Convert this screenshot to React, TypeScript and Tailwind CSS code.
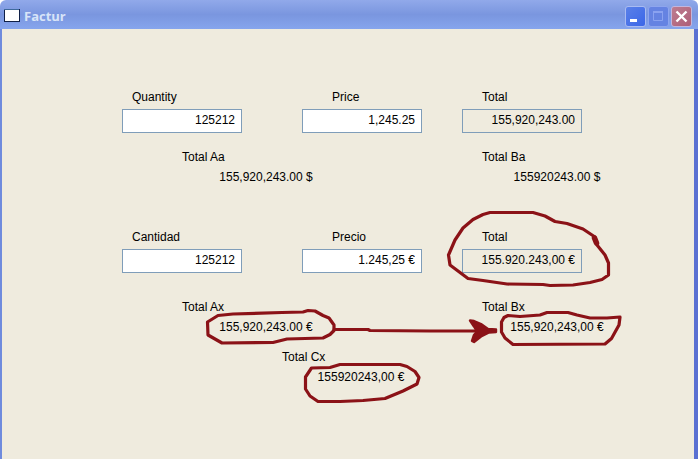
import { ReactNode } from "react";
import { clsx } from "clsx";

interface FieldProps {
    id: string;
    label: string;
    value: string;
    indent: string;
    readOnly?: boolean;
}

function Field({ id, label, value, indent, readOnly }: FieldProps) {
    return (
        <div className="flex w-[120px] flex-col gap-0.5">
            <label htmlFor={id} className={indent}>
                {label}
            </label>
            <input
                id={id}
                defaultValue={value}
                readOnly={readOnly}
                className={clsx(
                    "h-6 w-full border border-[#7f9db9] px-1.5 pb-0.5 text-right outline-none",
                    readOnly ? "bg-transparent" : "bg-white"
                )}
            />
        </div>
    );
}

interface TotalProps {
    label: string;
    value: string;
    width: string;
}

function Total({ label, value, width }: TotalProps) {
    return (
        <dl className={width}>
            <dt>{label}</dt>
            <dd className="text-center">{value}</dd>
        </dl>
    );
}

function CaptionButton({ label, className, children }: { label: string; className: string; children: ReactNode }) {
    return (
        <button
            type="button"
            aria-label={label}
            className={clsx("size-[21px] rounded-[3px] border", className)}
        >
            <svg viewBox="0 0 19 19" className="size-full" fill="none">
                {children}
            </svg>
        </button>
    );
}

function TitleBar() {
    return (
        <header className="flex h-[29px] items-center rounded-t-md bg-linear-to-b from-[#91a9ea] via-[#7a96df] to-[#86a5ed] pt-[3px] pr-1.5 pl-1">
            <svg viewBox="0 0 16 14" className="h-3.5 w-4">
                <path d="M0 0h16v13H0z" fill="#102048" />
                <path d="M0 0h15v1H0z" fill="#3f6a9c" />
                <path d="M1 1h14v11H1z" fill="#fff" />
            </svg>
            <h1 className="ml-1 flex-1 font-['Open_Sans','Noto_Sans',sans-serif] text-[13px] font-bold text-[#d8e4f8]">
                Factur
            </h1>
            <div className="flex gap-0.5">
                <CaptionButton label="Minimize" className="border-[#a9bbf2] bg-linear-to-br from-[#5a80e8] to-[#3b66e8]">
                    <path d="M4 12h7v3H4z" fill="#fff" />
                </CaptionButton>
                <CaptionButton label="Maximize" className="border-[#8ea5ee] bg-[#6583e2]">
                    <path d="M4.5 5.5h9v8h-9z" stroke="#8aa2f0" />
                    <path d="M4 4h10v2H4z" fill="#8aa2f0" />
                </CaptionButton>
                <CaptionButton label="Close" className="border-[#c3b5dc] bg-linear-to-br from-[#bd7c90] to-[#ae5f77]">
                    <path d="M4.5 4.5l10 10M14.5 4.5l-10 10" stroke="#fff" strokeWidth="2.4" />
                </CaptionButton>
            </div>
        </header>
    );
}

// Red pen marks drawn over the form
function Marks() {
    return (
        <svg
            viewBox="2 29 692 430"
            className="pointer-events-none absolute top-0 left-0 h-[430px] w-[692px]"
            fill="none"
            stroke="#8b1217"
            strokeWidth="3.2"
            strokeLinejoin="round"
            strokeLinecap="round"
        >
            <path d="M490 212.5H533L545 216L555 221.5L567 223.5L583 229L595 237L597 245L605 255L608.5 263V275L602 279.5L590 282.5L573 285L550 285.5L543 284.5L507 284L483 280.5L468 278.5L450 265L448.5 255L455 240L463 228L473 219.5L483 214.5Z" />
            <path d="M594.5 238l2 5" strokeWidth="5.5" />
            <path d="M508 315.5L520 316.5L540 315L547 312.5H568L577 315L590 318H607L620 317L619 325L611.5 338.5L605 344L513 344.5L505 338L501.5 332V322L504 317.5Z" />
            <path d="M218 315.5L233 314L282 312.5L303 312L308 310.5L315 311L323 315.5L329 318L334 325V330.5L330 334.5L323 338L287 339L273 342.5L222 343L208 335L207.5 322Z" />
            <path d="M334 329.5H368L370 330.5L430 331H476" />
            <path
                d="M470 320.5L474 321L481 324L488 329L496 329.5V332L489 332.5L481 336.5L474 342L472 341L474 335L477 331.5L474 326.5Z"
                fill="#8b1217"
                strokeWidth="2.4"
            />
            <path d="M311.5 368L330 367.5L340 364.5H400L407 366.5L415 371.5L419 377.5L417 384L403 391L385 398.5L363 400.5L340 401.5H318L310 396L305.5 389V377Z" />
        </svg>
    );
}

export default function App() {
    return (
        <div className="flex min-h-screen flex-col bg-white font-['Liberation_Sans',Arial,sans-serif] text-[12px] leading-5 text-black">
            <TitleBar />
            <div className="flex flex-1 border-r-4 border-l-2 border-r-[#5a70d2] border-l-[#6f8bdd] bg-[#efebde]">
                <main className="relative flex-1 pt-[58px] pl-[120px]">
                    <section>
                        <div className="flex">
                            <Field id="quantity" label="Quantity" value="125212" indent="pl-2.5" />
                            <div className="ml-15 flex gap-10">
                                <Field id="price" label="Price" value="1,245.25" indent="pl-7.5" />
                                <Field id="total" label="Total" value="155,920,243.00" indent="pl-5" readOnly />
                            </div>
                        </div>
                        <div className="mt-3.5 flex gap-[132px] pl-15">
                            <Total label="Total Aa" value="155,920,243.00 $" width="w-[168px]" />
                            <Total label="Total Ba" value="155920243.00 $" width="w-[150px]" />
                        </div>
                    </section>
                    <section className="mt-10">
                        <div className="flex">
                            <Field id="cantidad" label="Cantidad" value="125212" indent="pl-2.5" />
                            <div className="ml-15 flex gap-10">
                                <Field id="precio" label="Precio" value="1.245,25 €" indent="pl-7.5" />
                                <Field id="total-es" label="Total" value="155.920.243,00 €" indent="pl-5" readOnly />
                            </div>
                        </div>
                        <div className="mt-6 flex gap-[132px] pl-15">
                            <Total label="Total Ax" value="155,920,243.00 €" width="w-[168px]" />
                            <Total label="Total Bx" value="155,920,243,00 €" width="w-[150px]" />
                        </div>
                        <div className="mt-2.5 pl-40">
                            <Total label="Total Cx" value="155920243,00 €" width="w-[158px]" />
                        </div>
                    </section>
                    <Marks />
                </main>
            </div>
        </div>
    );
}
